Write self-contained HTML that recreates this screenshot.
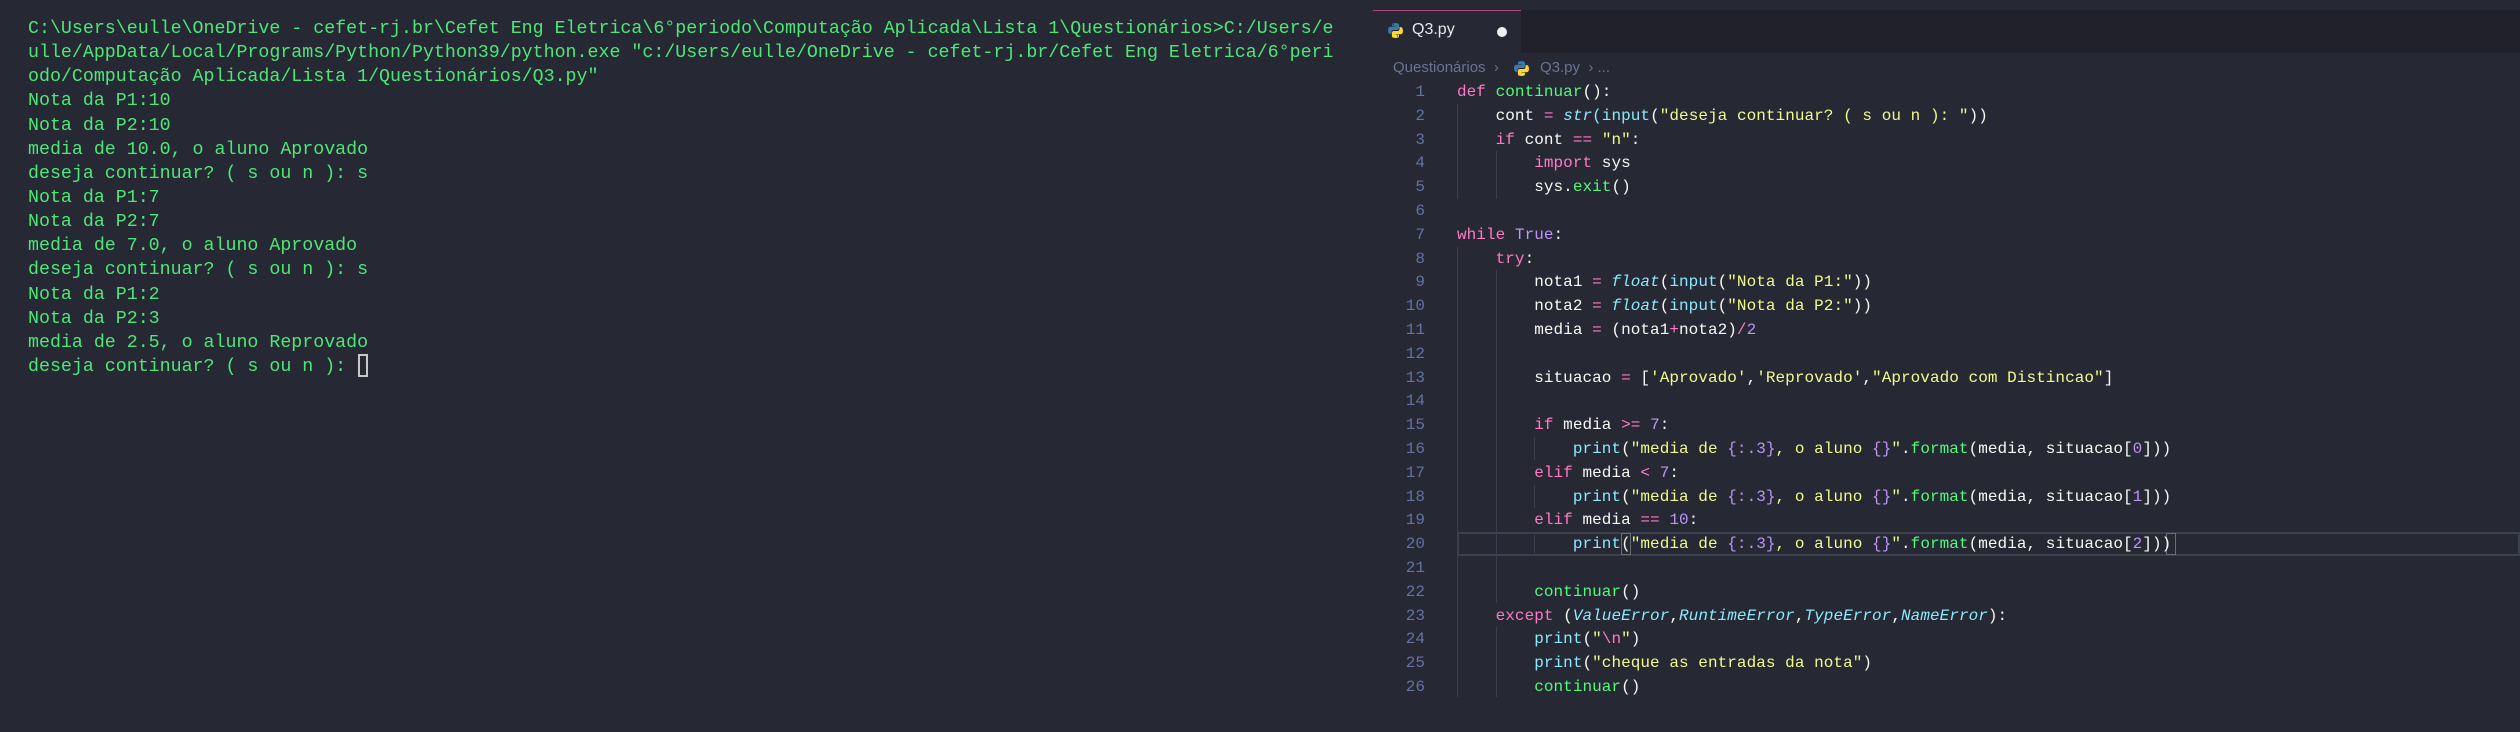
<!DOCTYPE html>
<html><head><meta charset="utf-8"><style>
*{margin:0;padding:0;box-sizing:border-box}
body{width:2520px;height:732px;background:#262834;overflow:hidden;position:relative;font-family:"Liberation Mono",monospace}
.t{position:absolute;left:28px;top:17px;color:#4de777;font-size:18.3px}
.t div{height:24.15px;line-height:24.15px;white-space:pre}
#tabbar{position:absolute;left:1373px;top:10px;width:1147px;height:43px;background:#1f2029}
#tab{position:absolute;left:1373px;top:10px;width:148px;height:43px;background:#262834;border-top:1px solid #a8457f}
.sans{font-family:"Liberation Sans",sans-serif}
.ln{position:absolute;left:1380px;width:45px;text-align:right;color:#6272a4;font-size:16px;line-height:23.8px;white-space:pre}
.c{position:absolute;left:1457px;color:#f8f8f2;font-size:16px;line-height:23.8px;white-space:pre;letter-spacing:0.05px}
.k{color:#ff79c6}.g{color:#50fa7b}.y{color:#f1fa8c}.b{color:#8be9fd}.i{color:#8be9fd;font-style:italic}.p{color:#bd93f9}
.gd{position:absolute;width:1px;background:#3b3e4f}
</style></head><body>
<div class="t">
<div>C:\Users\eulle\OneDrive - cefet-rj.br\Cefet Eng Eletrica\6°periodo\Computação Aplicada\Lista 1\Questionários>C:/Users/e</div>
<div>ulle/AppData/Local/Programs/Python/Python39/python.exe "c:/Users/eulle/OneDrive - cefet-rj.br/Cefet Eng Eletrica/6°peri</div>
<div>odo/Computação Aplicada/Lista 1/Questionários/Q3.py"</div>
<div>Nota da P1:10</div>
<div>Nota da P2:10</div>
<div>media de 10.0, o aluno Aprovado</div>
<div>deseja continuar? ( s ou n ): s</div>
<div>Nota da P1:7</div>
<div>Nota da P2:7</div>
<div>media de 7.0, o aluno Aprovado</div>
<div>deseja continuar? ( s ou n ): s</div>
<div>Nota da P1:2</div>
<div>Nota da P2:3</div>
<div>media de 2.5, o aluno Reprovado</div>
<div>deseja continuar? ( s ou n ): </div>
</div>
<div style="position:absolute;left:358px;top:354px;width:10px;height:23px;border:2px solid #c8c8c8"></div>

<div id="tabbar"></div>
<div id="tab"></div>
<svg style="position:absolute;left:1387px;top:22px" width="17" height="17" viewBox="0 0 16 16"><path d="M7.9 1C4.5 1 4.7 2.5 4.7 2.5V4h3.3v.5H3.3S1 4.2 1 7.8s2 3.4 2 3.4h1.2V9.5s-.1-2 2-2h3.3s1.9 0 1.9-1.9V2.9S11.7 1 7.9 1zM6 2.1a.6.6 0 110 1.2.6.6 0 010-1.2z" fill="#3c78aa"/><path d="M8.1 15c3.4 0 3.2-1.5 3.2-1.5V12H8v-.5h4.7s2.3.3 2.3-3.3-2-3.4-2-3.4h-1.2v1.7s.1 2-2 2H6.5s-1.9 0-1.9 1.9v3.1S4.3 15 8.1 15zm1.9-1.1a.6.6 0 110-1.2.6.6 0 010 1.2z" fill="#fdd835"/></svg>
<div class="sans" style="position:absolute;left:1412px;top:21px;color:#e8e8ea;font-size:16px">Q3.py</div>
<div style="position:absolute;left:1497px;top:27px;width:10px;height:10px;border-radius:50%;background:#f0f0f0"></div>

<div class="sans" style="position:absolute;left:1393px;top:59px;color:#6b7394;font-size:15px;white-space:pre">Questionários  ›</div>
<svg style="position:absolute;left:1513px;top:60px" width="17" height="17" viewBox="0 0 16 16"><path d="M7.9 1C4.5 1 4.7 2.5 4.7 2.5V4h3.3v.5H3.3S1 4.2 1 7.8s2 3.4 2 3.4h1.2V9.5s-.1-2 2-2h3.3s1.9 0 1.9-1.9V2.9S11.7 1 7.9 1z" fill="#3c78aa"/><path d="M8.1 15c3.4 0 3.2-1.5 3.2-1.5V12H8v-.5h4.7s2.3.3 2.3-3.3-2-3.4-2-3.4h-1.2v1.7s.1 2-2 2H6.5s-1.9 0-1.9 1.9v3.1S4.3 15 8.1 15z" fill="#fdd835"/></svg>
<div class="sans" style="position:absolute;left:1540px;top:59px;color:#6b7394;font-size:15px;white-space:pre">Q3.py  › ...</div>

<div style="position:absolute;left:1457px;top:532px;width:1063px;height:24px;border:2px solid #3d404f"></div>
<div style="position:absolute;left:1621px;top:533px;width:10px;height:22px;border:1px solid #6a6d78"></div>
<div style="position:absolute;left:2166px;top:533px;width:10px;height:22px;border:1px solid #6a6d78"></div>

<div class="gd" style="left:1457px;top:104px;height:95px"></div>
<div class="gd" style="left:1496px;top:151px;height:48px"></div>
<div class="gd" style="left:1457px;top:247px;height:450px"></div>
<div class="gd" style="left:1496px;top:270px;height:333px"></div>
<div class="gd" style="left:1534px;top:437px;height:23px"></div>
<div class="gd" style="left:1534px;top:485px;height:23px"></div>
<div class="gd" style="left:1534px;top:532px;height:23px"></div>
<div class="gd" style="left:1496px;top:627px;height:70px"></div>

<div class="ln" style="top:81px">1
2
3
4
5
6
7
8
9
10
11
12
13
14
15
16
17
18
19
20
21
22
23
24
25
26</div>
<div class="c" style="top:81px"><span class="k">def</span> <span class="g">continuar</span>():
    cont <span class="k">=</span> <span class="i">str</span><span class="b">(input</span>(<span class="y">"deseja continuar? ( s ou n ): "</span>))
    <span class="k">if</span> cont <span class="k">==</span> <span class="y">"n"</span>:
        <span class="k">import</span> sys
        sys.<span class="g">exit</span>()

<span class="k">while</span> <span class="p">True</span>:
    <span class="k">try</span>:
        nota1 <span class="k">=</span> <span class="i">float</span>(<span class="b">input</span>(<span class="y">"Nota da P1:"</span>))
        nota2 <span class="k">=</span> <span class="i">float</span>(<span class="b">input</span>(<span class="y">"Nota da P2:"</span>))
        media <span class="k">=</span> (nota1<span class="k">+</span>nota2)<span class="k">/</span><span class="p">2</span>

        situacao <span class="k">=</span> [<span class="y">'Aprovado'</span>,<span class="y">'Reprovado'</span>,<span class="y">"Aprovado com Distincao"</span>]

        <span class="k">if</span> media <span class="k">&gt;=</span> <span class="p">7</span>:
            <span class="b">print</span>(<span class="y">"media de </span><span class="p">{:.3}</span><span class="y">, o aluno </span><span class="p">{}</span><span class="y">"</span>.<span class="g">format</span>(media, situacao[<span class="p">0</span>]))
        <span class="k">elif</span> media <span class="k">&lt;</span> <span class="p">7</span>:
            <span class="b">print</span>(<span class="y">"media de </span><span class="p">{:.3}</span><span class="y">, o aluno </span><span class="p">{}</span><span class="y">"</span>.<span class="g">format</span>(media, situacao[<span class="p">1</span>]))
        <span class="k">elif</span> media <span class="k">==</span> <span class="p">10</span>:
            <span class="b">print</span>(<span class="y">"media de </span><span class="p">{:.3}</span><span class="y">, o aluno </span><span class="p">{}</span><span class="y">"</span>.<span class="g">format</span>(media, situacao[<span class="p">2</span>]))

        <span class="g">continuar</span>()
    <span class="k">except</span> (<span class="i">ValueError</span>,<span class="i">RuntimeError</span>,<span class="i">TypeError</span>,<span class="i">NameError</span>):
        <span class="b">print</span>(<span class="y">"</span><span class="k">\n</span><span class="y">"</span>)
        <span class="b">print</span>(<span class="y">"cheque as entradas da nota"</span>)
        <span class="g">continuar</span>()</div>
</body></html>
